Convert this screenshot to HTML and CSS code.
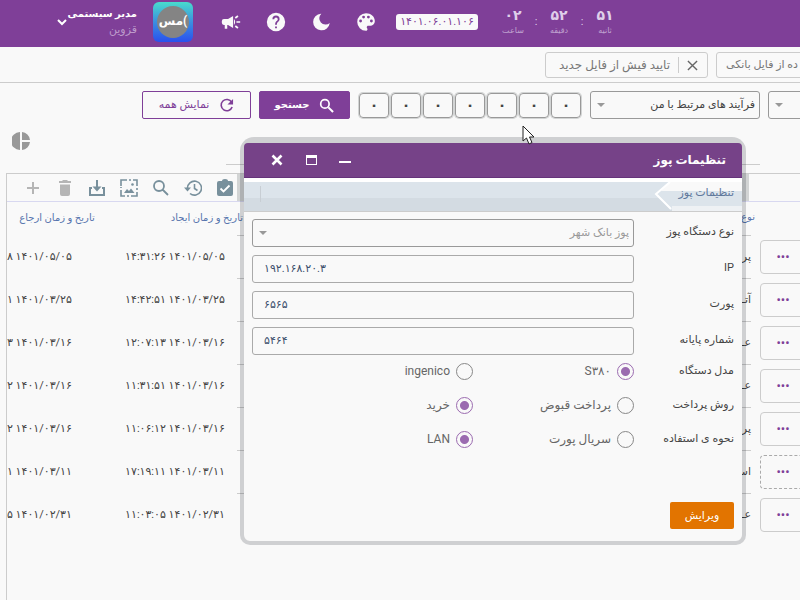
FILE: index.html
```html
<!DOCTYPE html>
<html lang="fa" dir="rtl">
<head>
<meta charset="utf-8">
<title>تنظیمات پوز</title>
<link rel="stylesheet" href="styles.css">
</head>
<body>
<header class="topbar">
  <div class="clock">
    <div class="unit"><b>۵۱</b><small>ثانیه</small></div><i>:</i>
    <div class="unit"><b>۵۲</b><small>دقیقه</small></div><i>:</i>
    <div class="unit"><b>۰۲</b><small>ساعت</small></div>
  </div>
  <span class="version" dir="ltr">۱۴۰۱.۰۶.۰۱.۱۰۶</span>
  <nav class="quick">
    <button aria-label="پوسته"><svg viewBox="0 0 24 24"><path fill-rule="evenodd" d="M12 1.500a10.500 10.500 0 0 0 0 21c1 0 1.800-.8 1.800-1.800 0-.5-.2-.9-.5-1.200-.3-.3-.4-.7-.4-1.100 0-1 .8-1.800 1.800-1.800h2.100c3.200 0 5.800-2.600 5.800-5.800C22.600 5.500 17.800 1.500 12 1.500zM5.500 12.500a1.700 1.700 0 1 1 0-3.400 1.700 1.700 0 0 1 0 3.400zm3.600-4.700a1.700 1.700 0 1 1 0-3.400 1.700 1.700 0 0 1 0 3.400zm5.800 0a1.700 1.700 0 1 1 0-3.400 1.700 1.700 0 0 1 0 3.400zm3.600 4.700a1.700 1.700 0 1 1 0-3.400 1.700 1.700 0 0 1 0 3.400z"/></svg></button>
    <button aria-label="حالت شب"><svg viewBox="0 0 24 24"><path d="M12 2a10 10 0 1 0 10.500 11.200A6.800 6.800 0 1 1 12.400 2z"/></svg></button>
    <button aria-label="راهنما"><svg viewBox="0 0 24 24"><path fill-rule="evenodd" d="M12 1a11 11 0 1 0 0 22 11 11 0 0 0 0-22zm1.100 18.500h-2.200v-2.200h2.200zm2.200-8.500-1 1c-.8.800-1.200 1.500-1.200 3.200h-2.200v-.6c0-1.200.5-2.300 1.200-3.100l1.400-1.400c.4-.4.600-.9.600-1.500a2.100 2.100 0 0 0-4.200 0H7.700a4.300 4.300 0 0 1 8.600 0c0 .9-.4 1.800-1 2.400z"/></svg></button>
    <button aria-label="اعلان‌ها"><svg viewBox="0 0 24 24"><path d="M18.500 11v2h4.500v-2zM16.500 17.600l3.200 2.400 1.300-1.600-3.200-2.400zM21 5.600 19.700 4l-3.200 2.400L17.800 8zM3.500 8.500A2.500 2.500 0 0 0 1 11v2a2.500 2.500 0 0 0 2.500 2.500h1V20h3v-4.500h1l6 3.800V4.700l-6 3.800zM15.500 12c0-1.300 0 0 0-3.500 2 1.500 2 5.500 0 7z"/></svg></button>
  </nav>
  <div class="avatar"><span>)مس</span></div>
  <div class="user"><strong>مدیر سیستمی</strong><span>قزوین</span></div>
  <button class="more" aria-label="منوی کاربر"><svg viewBox="0 0 12 12"><path d="m2 4 4 4 4-4" fill="none" stroke="#fff" stroke-width="2"/></svg></button>
</header>

<div class="tabs">
  <div class="tab tab-long">ده از فایل بانکی</div>
  <div class="tab"><button aria-label="بستن"><svg viewBox="0 0 12 12"><path d="m1 1 10 10M11 1 1 11" fill="none" stroke="#666" stroke-width="1.500"/></svg></button><span class="tab-title">تایید فیش از فایل جدید</span></div>
</div>

<main>
  <form class="filters">
    <div class="pick pick-short"><select aria-label="وضعیت"><option></option></select></div>
    <div class="pick"><select aria-label="فرآیند"><option>فرآیند های مرتبط با من</option></select></div>
    <div class="digits">
      <button type="button">۰</button><button type="button">۰</button><button type="button">۰</button><button type="button">۰</button><button type="button">۰</button><button type="button">۰</button><button type="button">۰</button>
    </div>
    <button type="button" class="btn btn-main"><svg viewBox="0 0 16 16"><path d="M10 10l5 5" stroke="#fff" stroke-width="2.200"/><circle cx="6.300" cy="6.300" r="4.500" fill="none" stroke="#fff" stroke-width="1.800"/></svg>جستجو</button>
    <button type="button" class="btn btn-line"><svg viewBox="0 0 16 16"><path d="M13.500 4.500A6 6 0 1 0 14 9.500" fill="none" stroke="#7f3f98" stroke-width="1.700"/><path d="M15 1v6H9z" fill="#7f3f98"/></svg>نمایش همه</button>
  </form>

  <div class="chart-row"><span class="chart-line"></span><svg viewBox="0 0 18 18"><path d="M8 0v18A9 9 0 0 1 8 0zM10 0a9 9 0 0 1 8 8h-8zM10 10h8a9 9 0 0 1-8 8z" fill="#999"/></svg></div>

  <section class="panel">
    <div class="toolbar">
      <span class="toolbar-start"></span>
      <span class="toolbar-fill"></span>
      <div class="tools">
        <button aria-label="تایید"><svg viewBox="0 0 18 18"><path fill-rule="evenodd" d="M3 2h3a3 2 0 0 1 6 0h3a2 2 0 0 1 2 2v11a2 2 0 0 1-2 2H3a2 2 0 0 1-2-2V4a2 2 0 0 1 2-2z"/><path d="m4.500 9.500 3 3 6-6" fill="none" stroke="#fff" stroke-width="1.800"/></svg></button>
        <button aria-label="تاریخچه"><svg viewBox="0 0 18 18"><path d="M3.500 9.500A7 7 0 1 1 6 14.500M10.500 5v4.500l3 2" fill="none" stroke="#78909c" stroke-width="1.600"/><path d="M0 8.500h7l-3.500 4z"/></svg></button>
        <button aria-label="جستجو"><svg viewBox="0 0 18 18"><path d="m10.500 10.500 5.500 5.500M12 7A5 5 0 1 1 2 7a5 5 0 0 1 10 0z" fill="none" stroke="#78909c" stroke-width="1.800"/></svg></button>
        <button aria-label="تصویر"><svg viewBox="0 0 18 18"><path d="M1 7V1h6m2 0h2m2 0h4v6m0 2v2m0 2v4h-6m-2 0H7m-2 0H1v-6m0-2V8" fill="none" stroke="#78909c" stroke-width="1.600"/><path d="m4 14 3-4 2 2 2-2.500 3.500 4.500z"/><circle cx="12.500" cy="5.500" r="1.300"/></svg></button>
        <button aria-label="دریافت"><svg viewBox="0 0 18 18"><path d="M4 9H2v7h14V9h-2M9 1v9" fill="none" stroke="#78909c" stroke-width="2"/><path d="M4.500 7.500h9L9 12.500z"/></svg></button>
        <button aria-label="حذف" disabled><svg viewBox="0 0 18 18"><path d="M3 2h3l1-1h4l1 1h3v2H3zM4 5.500h10V15a2 2 0 0 1-2 2H6a2 2 0 0 1-2-2z"/></svg></button>
        <button aria-label="افزودن" disabled><svg viewBox="0 0 18 18"><path d="M8 3h2v5h5v2h-5v5H8v-5H3V8h5z"/></svg></button>
      </div>
    </div>
    <table>
      <thead><tr><th class="c-act"></th><th class="c-type"><span>نوع</span></th><th class="c-made"><span>تاریخ و زمان ایجاد</span></th><th class="c-sent">تاریخ و زمان ارجاع</th></tr></thead>
      <tbody>
        <tr><td class="c-act"><button>•••</button></td><td class="c-type">پر</td><td class="c-made" dir="ltr">۱۴:۳۱:۲۶ ۱۴۰۱/۰۵/۰۵</td><td class="c-sent" dir="ltr">۱۴:۳۱:۲۸ ۱۴۰۱/۰۵/۰۵</td></tr>
        <tr><td class="c-act"><button>•••</button></td><td class="c-type">آتـ</td><td class="c-made" dir="ltr">۱۴:۴۲:۵۱ ۱۴۰۱/۰۳/۲۵</td><td class="c-sent" dir="ltr">۱۴:۴۲:۵۱ ۱۴۰۱/۰۳/۲۵</td></tr>
        <tr><td class="c-act"><button>•••</button></td><td class="c-type">عـ</td><td class="c-made" dir="ltr">۱۲:۰۷:۱۳ ۱۴۰۱/۰۳/۱۶</td><td class="c-sent" dir="ltr">۱۲:۰۷:۱۳ ۱۴۰۱/۰۳/۱۶</td></tr>
        <tr><td class="c-act"><button>•••</button></td><td class="c-type">عـ</td><td class="c-made" dir="ltr">۱۱:۳۱:۵۱ ۱۴۰۱/۰۳/۱۶</td><td class="c-sent" dir="ltr">۱۱:۳۱:۵۲ ۱۴۰۱/۰۳/۱۶</td></tr>
        <tr><td class="c-act"><button>•••</button></td><td class="c-type">پر</td><td class="c-made" dir="ltr">۱۱:۰۶:۱۲ ۱۴۰۱/۰۳/۱۶</td><td class="c-sent" dir="ltr">۱۱:۰۶:۱۲ ۱۴۰۱/۰۳/۱۶</td></tr>
        <tr><td class="c-act"><button class="dashed">•••</button></td><td class="c-type">اسـ</td><td class="c-made" dir="ltr">۱۷:۱۹:۱۱ ۱۴۰۱/۰۳/۱۱</td><td class="c-sent" dir="ltr">۱۷:۱۹:۱۱ ۱۴۰۱/۰۳/۱۱</td></tr>
        <tr><td class="c-act"><button>•••</button></td><td class="c-type">عـ</td><td class="c-made" dir="ltr">۱۱:۰۳:۰۵ ۱۴۰۱/۰۲/۳۱</td><td class="c-sent" dir="ltr">۱۱:۰۳:۰۵ ۱۴۰۱/۰۲/۳۱</td></tr>
      </tbody>
    </table>
  </section>
</main>

<div class="dialog" role="dialog" aria-labelledby="dialog-title">
  <div class="titlebar">
    <h1 id="dialog-title">تنظیمات پوز</h1>
    <button aria-label="کوچک کردن"><svg viewBox="0 0 12 12"><path d="M0 7h12v2H0z"/></svg></button>
    <button aria-label="بزرگ کردن"><svg viewBox="0 0 12 12"><path fill-rule="evenodd" d="M1 1h11v10H1zm1 3v6h9V4z"/></svg></button>
    <button aria-label="بستن"><svg viewBox="0 0 12 12"><path d="m1.500 1.500 9 9M10.500 1.500l-9 9" stroke="#fff" stroke-width="2.600"/></svg></button>
  </div>
  <div class="crumbs"><a href="#">تنظیمات پوز</a><svg viewBox="0 0 18 28"><path d="M17 0h1v28h-1L3 13z" fill="#dce4eb"/><path d="M15 0h3v9h-11z" fill="#f9f9f9"/><path d="M16 0 2 12l15 15" fill="none" stroke="#fff" stroke-width="2"/></svg><span class="crumb-end"></span></div>
  <form class="settings">
    <label for="kind">نوع دستگاه پوز</label>
    <div class="pick muted"><select id="kind"><option>پوز بانک شهر</option></select></div>
    <label for="ip">IP</label><input id="ip" type="text" dir="ltr" value="۱۹۲.۱۶۸.۲۰.۳">
    <label for="port">پورت</label><input id="port" type="text" dir="ltr" value="۶۵۶۵">
    <label for="term">شماره پایانه</label><input id="term" type="text" dir="ltr" value="۵۴۶۴">
    <div class="choices">
      <span>مدل دستگاه</span>
      <label><input type="radio" name="model" checked><span dir="ltr">S۳۸۰</span></label>
      <label><input type="radio" name="model"><span>ingenico</span></label>
      <span>روش پرداخت</span>
      <label><input type="radio" name="pay"><span>پرداخت قبوض</span></label>
      <label><input type="radio" name="pay" checked><span>خرید</span></label>
      <span>نحوه ی استفاده</span>
      <label><input type="radio" name="link"><span>سریال پورت</span></label>
      <label><input type="radio" name="link" checked><span>LAN</span></label>
    </div>
    <button type="button" class="edit">ویرایش</button>
  </form>
</div>
<svg class="pointer" viewBox="0 0 13 20"><path d="M1 1v15l3.500-3 2.500 6 3-1.500-2.500-5.500H12z" fill="#fff" stroke="#222"/></svg>
</body>
</html>
```
FILE: styles.css
```css
* { box-sizing: border-box; }
html { overflow: hidden; background: #f9f9f9; }
body {
  position: relative;
  margin: 0;
  min-height: 100vh;
  overflow: hidden;
  color: #444;
  font: 11px/16px Roboto, "DejaVu Sans", sans-serif;
}
button, input, select { font: inherit; color: inherit; }
button { margin: 0; padding: 0; border: 0; background: none; }
svg { display: block; }

/* header */
.topbar {
  display: flex;
  align-items: center;
  justify-content: flex-end;
  height: 47px;
  padding-left: 56px;
  padding-bottom: 4px;
  background: #7f3f98;
  color: #fff;
}
.clock { display: flex; align-items: center; color: #dfcfea; }
.clock i { width: 6px; text-align: center; font-style: normal; }
.unit { display: flex; flex-direction: column; align-items: center; width: 40px; }
.unit b { font-size: 14px; line-height: 18px; }
.unit small { font-size: 8px; line-height: 14px; color: #c0a3d0; }
.version {
  width: 82px;
  margin: 0 15px 0 20px;
  border-radius: 3px;
  background: #f9f9f9;
  color: #7f3f98;
  text-align: center;
}
.quick { display: flex; gap: 25px; }
.quick svg { width: 20px; height: 20px; fill: #f9f9f9; }
.avatar {
  display: grid;
  place-items: center;
  width: 40px;
  height: 40px;
  margin: 0 28px 0 16px;
  border-radius: 6px;
  background: linear-gradient(#48dccc, #3b8fe0 50%, #2a50ee);
}
.avatar span {
  width: 32px;
  height: 32px;
  border-radius: 50%;
  background: #848484;
  font-size: 12px;
  font-weight: bold;
  line-height: 30px;
  text-align: center;
}
.user {
  display: flex;
  flex-direction: column;
  width: 68px;
  margin-left: 1px;
  font-size: 10px;
  white-space: nowrap;
}
.user span { color: #bd9bcb; font-size: 11px; }
.more svg { width: 12px; height: 12px; }

/* open pages */
.tabs {
  display: flex;
  justify-content: flex-end;
  gap: 8px;
  height: 36px;
  padding: 5px 0 4px 545px;
  border-bottom: 1px solid #ccc;
}
.tab {
  display: flex;
  flex: none;
  align-items: center;
  width: 163px;
  height: 26px;
  padding: 0 9px;
  border: 1px solid #ccc;
  border-radius: 3px;
  color: #777;
  font-size: 12px;
  white-space: nowrap;
}
.tab-long { justify-content: flex-end; font-size: 11px; }
.tab svg { width: 11px; height: 11px; }
.tab-title { margin-right: 8px; padding-right: 8px; border-right: 1px solid #ccc; }

/* filters */
.filters {
  display: flex;
  align-items: center;
  justify-content: flex-end;
  gap: 8px;
  padding: 8px 0 0 142px;
}
.pick { position: relative; flex: none; width: 170px; }
.pick select {
  width: 100%;
  height: 28px;
  padding: 0 4px;
  border: 1px solid #999;
  border-radius: 3px;
  background: none;
  appearance: none;
}
.pick::after {
  content: "";
  position: absolute;
  top: 12px;
  left: 7px;
  border: 4px solid transparent;
  border-top-color: #999;
  border-bottom: 0;
}
.digits { display: flex; gap: 2px; margin: 0 1px; }
.digits button {
  width: 30px;
  height: 25px;
  border: 1px solid #999;
  border-radius: 4px;
  box-shadow: 0 0 0 1px #d2d4d4;
  font-size: 14px;
  font-weight: bold;
}
.btn {
  display: flex;
  flex: none;
  align-items: center;
  justify-content: center;
  gap: 10px;
  height: 28px;
  border: 1px solid #7f3f98;
  border-radius: 2px;
}
.btn svg { width: 15px; height: 15px; }
.btn-main { width: 91px; background: #7f3f98; color: #fff; font-size: 10px; font-weight: bold; }
.btn-line { width: 109px; color: #7f3f98; }

.chart-row { display: flex; justify-content: flex-end; height: 54px; padding: 13px 0 8px 12px; }
.chart-row svg { width: 18px; height: 18px; }
.chart-line { flex: none; width: 534px; margin-left: 196px; border-bottom: 1px solid #ccc; }

/* list */
.panel {
  min-height: 427px;
  margin-left: 6px;
  overflow: hidden;
  border: solid #ccc;
  border-width: 1px 0 0 1px;
}
.toolbar { display: flex; justify-content: flex-end; height: 28px; border-bottom: 1px solid #d8d8f0; }
.toolbar-start { flex: 1; }
.toolbar-fill { flex: none; width: 512px; background: #d2d4d4; }
.tools { display: flex; flex: none; align-items: center; gap: 14px; width: 230px; padding: 0 3px; }
.tools svg { width: 18px; height: 18px; fill: #78909c; }
.tools :disabled svg { fill: #b5b5b5; }
table {
  float: left;
  width: 897px;
  margin-left: -88px;
  table-layout: fixed;
  border-collapse: collapse;
}
th { height: 33px; padding: 0 0 2px; color: #5674ad; font-size: 10px; font-weight: normal; white-space: nowrap; }
td { height: 43px; padding: 0; text-align: center; white-space: nowrap; }
.c-act { width: 65px; }
.c-type { width: 514px; text-align: right; }
.c-type span { display: block; margin-right: -4px; }
td.c-type { border-top: 1px solid #ccc; }
.c-made { width: 112px; }
td.c-made { padding-right: 12px; }
.c-made span { display: block; margin-right: -6px; text-align: right; }
th.c-sent { padding-left: 70px; }
.c-act button {
  display: block;
  width: 46px;
  height: 34px;
  margin-right: 10px;
  border: 1px solid #ccc;
  border-radius: 4px;
  color: #7f3f98;
  font-size: 13px;
}
.c-act .dashed { border: 1px dashed #aaa; }

/* device window */
.dialog {
  position: absolute;
  top: 137px;
  right: 54px;
  left: 30%;
  border: 4px solid rgba(0, 8, 16, .17);
  border-top-width: 6px;
  border-radius: 14px 14px 10px 10px;
  background: #f9f9f9;
  background-clip: padding-box;
}
.titlebar {
  display: flex;
  align-items: center;
  gap: 22px;
  height: 35px;
  padding: 0 16px 0 27px;
  border-bottom: 1px solid #65337a;
  border-radius: 4px 4px 0 0;
  background: #764288;
  color: #fff;
}
.titlebar h1 { flex: 1; margin: 0; font-size: 12px; line-height: 20px; }
.titlebar svg { width: 12px; height: 12px; fill: #fff; }
.crumbs {
  display: flex;
  height: 34px;
  border-top: 4px solid #fff;
  border-bottom: 1px solid #ccc;
  background: linear-gradient(#dce4eb 16px, #d3dbe2 16px);
}
.crumbs a {
  width: 70px;
  padding: 3px 8px 0 0;
  background: linear-gradient(#f9f9f9 9px, #dce4eb 9px, #dce4eb 24px, #eef1f4 24px);
  color: #60789c;
  text-decoration: none;
  white-space: nowrap;
}
.crumbs svg { width: 18px; height: 28px; }
.crumb-end { height: 16px; margin: 4px auto 0 16px; border-left: 1px solid #c8ced4; }
.settings {
  display: grid;
  grid-template-columns: 92px 1fr;
  gap: 8px;
  padding: 7px 8px 12px;
}
.settings > label { padding-top: 5px; }
.settings .pick { width: 100%; }
.muted { color: #999; }
.settings input[type="text"] {
  width: 100%;
  height: 28px;
  padding: 0 11px 2px;
  border: 1px solid #aaa;
  border-radius: 3px;
  background: none;
  color: #3c4f6c;
  outline: 0;
}
.choices {
  display: grid;
  grid-column: 1 / -1;
  grid-template-columns: 100px 161px 1fr;
  grid-auto-rows: 34px;
}
.choices label { display: flex; gap: 6px; color: #666; font-size: 12px; }
.choices input {
  width: 17px;
  height: 17px;
  margin: 0;
  border: 1px solid #888;
  border-radius: 50%;
  appearance: none;
}
.choices input:checked {
  border-color: #9b6bb0;
  background: radial-gradient(#9b6bb0 4px, transparent 5px);
}
.choices label span { height: 16px; }
.edit {
  width: 64px;
  height: 27px;
  margin-top: 29px;
  border-radius: 2px;
  background: #e27400;
  color: #fff;
}
.pointer { position: absolute; top: 125px; left: 522px; width: 13px; height: 20px; }
```
